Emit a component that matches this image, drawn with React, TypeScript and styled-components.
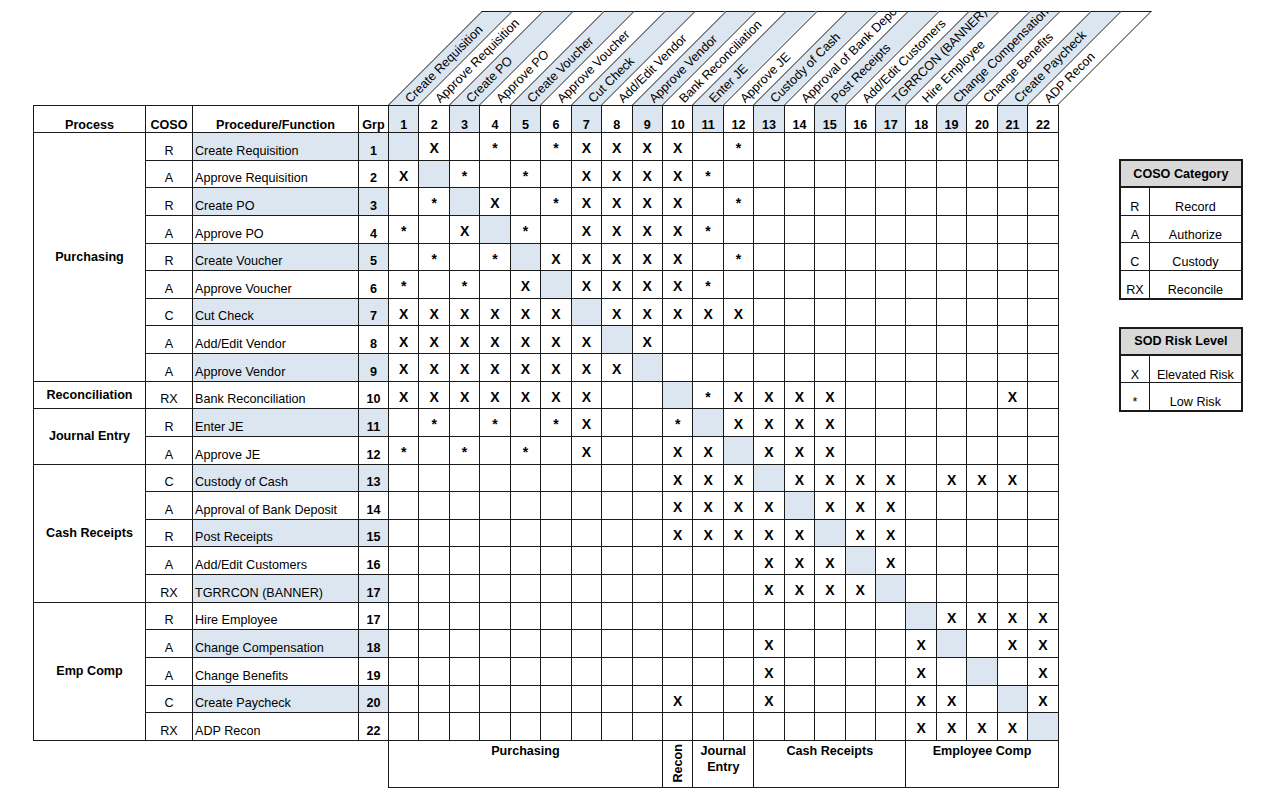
import React from "react";
import styled, { createGlobalStyle, css } from "styled-components";

const COL_W = 30.45;
const ROW_H = 27.636;
const LINE = "#1a1a1a";
const SHADE = "#dce6f1";
const FONT = `"Liberation Sans", Arial, sans-serif`;

const GlobalStyle = createGlobalStyle`
  html, body { margin: 0; padding: 0; background: #ffffff; }
  body { font-family: ${FONT}; color: #000; }
  * { box-sizing: border-box; }
`;

const headers = [
  "Create Requisition",
  "Approve Requisition",
  "Create PO",
  "Approve PO",
  "Create Voucher",
  "Approve Voucher",
  "Cut Check",
  "Add/Edit Vendor",
  "Approve Vendor",
  "Bank Reconciliation",
  "Enter JE",
  "Approve JE",
  "Custody of Cash",
  "Approval of Bank Deposit",
  "Post Receipts",
  "Add/Edit Customers",
  "TGRRCON (BANNER)",
  "Hire Employee",
  "Change Compensation",
  "Change Benefits",
  "Create Paycheck",
  "ADP Recon",
];

type Row = { coso: string; name: string; grp: string; marks: string };

const rows: Row[] = [
  { coso: "R", name: "Create Requisition", grp: "1", marks: ".X.*.*XXXX.*.........." },
  { coso: "A", name: "Approve Requisition", grp: "2", marks: "X.*.*.XXXX*..........." },
  { coso: "R", name: "Create PO", grp: "3", marks: ".*.X.*XXXX.*.........." },
  { coso: "A", name: "Approve PO", grp: "4", marks: "*.X.*.XXXX*..........." },
  { coso: "R", name: "Create Voucher", grp: "5", marks: ".*.*.XXXXX.*.........." },
  { coso: "A", name: "Approve Voucher", grp: "6", marks: "*.*.X.XXXX*..........." },
  { coso: "C", name: "Cut Check", grp: "7", marks: "XXXXXX.XXXXX.........." },
  { coso: "A", name: "Add/Edit Vendor", grp: "8", marks: "XXXXXXX.X............." },
  { coso: "A", name: "Approve Vendor", grp: "9", marks: "XXXXXXXX.............." },
  { coso: "RX", name: "Bank Reconciliation", grp: "10", marks: "XXXXXXX...*XXXX.....X." },
  { coso: "R", name: "Enter JE", grp: "11", marks: ".*.*.*X..*.XXXX......." },
  { coso: "A", name: "Approve JE", grp: "12", marks: "*.*.*.X..XX.XXX......." },
  { coso: "C", name: "Custody of Cash", grp: "13", marks: ".........XXX.XXXX.XXX." },
  { coso: "A", name: "Approval of Bank Deposit", grp: "14", marks: ".........XXXX.XXX....." },
  { coso: "R", name: "Post Receipts", grp: "15", marks: ".........XXXXX.XX....." },
  { coso: "A", name: "Add/Edit Customers", grp: "16", marks: "............XXX.X....." },
  { coso: "RX", name: "TGRRCON (BANNER)", grp: "17", marks: "............XXXX......" },
  { coso: "R", name: "Hire Employee", grp: "17", marks: "..................XXXX" },
  { coso: "A", name: "Change Compensation", grp: "18", marks: "............X....X..XX" },
  { coso: "A", name: "Change Benefits", grp: "19", marks: "............X....X...X" },
  { coso: "C", name: "Create Paycheck", grp: "20", marks: ".........X..X....XX..X" },
  { coso: "RX", name: "ADP Recon", grp: "22", marks: ".................XXXX." },
];

const processGroups: Record<number, { label: string; span: number }> = {
  0: { label: "Purchasing", span: 9 },
  9: { label: "Reconciliation", span: 1 },
  10: { label: "Journal Entry", span: 2 },
  12: { label: "Cash Receipts", span: 5 },
  17: { label: "Emp Comp", span: 5 },
};

const footerGroups = [
  { label: "Purchasing", span: 9, vertical: false },
  { label: "Recon", span: 1, vertical: true },
  { label: "Journal Entry", span: 2, vertical: false },
  { label: "Cash Receipts", span: 5, vertical: false },
  { label: "Employee Comp", span: 5, vertical: false },
];

const cosoLegend = [
  ["R", "Record"],
  ["A", "Authorize"],
  ["C", "Custody"],
  ["RX", "Reconcile"],
];

const sodLegend = [
  ["X", "Elevated Risk"],
  ["*", "Low Risk"],
];

/* ---------- layout ---------- */

const Page = styled.div`
  display: flex;
  align-items: flex-start;
  padding: 11px 0 0 33px;
  font-family: ${FONT};
  font-size: 12.6px;
`;

const Sheet = styled.div`
  display: flex;
  flex-direction: column;
`;

/* ---------- slanted header ---------- */

const SlantRow = styled.div`
  display: flex;
  height: 94px;
  margin-left: 355px;
`;

const Strip = styled.div<{ $shaded: boolean; $last: boolean }>`
  position: relative;
  flex: 0 0 ${(p) => (p.$last ? COL_W + 1 : COL_W)}px;
  height: 94px;
  border-top: 1px solid ${LINE};
  border-left: 1px solid ${LINE};
  ${(p) =>
    p.$last &&
    css`
      border-right: 1px solid ${LINE};
    `}
  background: ${(p) => (p.$shaded ? SHADE : "#fff")};
  transform: skewX(-45deg);
  transform-origin: 0 100%;
  overflow: hidden;
`;

const StripLabel = styled.div`
  position: absolute;
  left: 0;
  top: 100%;
  height: 21.5px;
  line-height: 21.5px;
  padding-left: 16px;
  white-space: nowrap;
  font-size: 12.6px;
  transform-origin: 0 0;
  transform: skewX(45deg) rotate(-45deg);
`;

/* ---------- main grid ---------- */

const Matrix = styled.div`
  display: grid;
  grid-template-columns: 112px 47px 166px 30px repeat(22, ${COL_W}px);
  grid-template-rows: 27px repeat(22, ${ROW_H}px);
  width: ${1 + 112 + 47 + 166 + 30 + 22 * COL_W}px;
  border-top: 1px solid ${LINE};
  border-left: 1px solid ${LINE};
`;

const Cell = styled.div<{ $shaded?: boolean }>`
  display: flex;
  align-items: flex-end;
  justify-content: center;
  border-right: 1px solid ${LINE};
  border-bottom: 1px solid ${LINE};
  padding-bottom: 2px;
  white-space: nowrap;
  overflow: hidden;
  line-height: normal;
  background: ${(p) => (p.$shaded ? SHADE : "transparent")};
`;

const HeadCell = styled(Cell)`
  font-weight: bold;
  padding-bottom: 0;
`;

const ProcessCell = styled(Cell)<{ $span: number }>`
  grid-row: span ${(p) => p.$span};
  align-items: center;
  padding-bottom: 0;
  font-weight: bold;
`;

const CosoCell = styled(Cell)``;

const ProcCell = styled(Cell)`
  justify-content: flex-start;
  padding-left: 2px;
`;

const GrpCell = styled(Cell)`
  font-weight: bold;
`;

const MarkCell = styled(Cell)`
  font-size: 14px;
  font-weight: bold;
  padding-bottom: 3.5px;
`;

/* ---------- footer groups ---------- */

const Footer = styled.div`
  display: grid;
  grid-template-columns: repeat(22, ${COL_W}px);
  height: 47px;
  margin-left: 355px;
  width: ${1 + 22 * COL_W}px;
  border-left: 1px solid ${LINE};
  border-bottom: 1px solid ${LINE};
`;

const FooterCell = styled.div<{ $span: number }>`
  grid-column: span ${(p) => p.$span};
  display: flex;
  justify-content: center;
  align-items: flex-start;
  padding: 2px 4px 0;
  border-right: 1px solid ${LINE};
  font-weight: bold;
  text-align: center;
  line-height: 16px;
`;

const VerticalText = styled.span`
  writing-mode: vertical-rl;
  transform: rotate(180deg);
  line-height: 14px;
  margin-top: 1px;
`;

/* ---------- legend ---------- */

const Legend = styled.div`
  display: flex;
  flex-direction: column;
  gap: 27px;
  margin-left: 60px;
  margin-top: 148px;
`;

const LegendBox = styled.div`
  width: 124px;
  border: 2px solid ${LINE};
`;

const LegendHead = styled.div`
  height: 27px;
  display: flex;
  align-items: center;
  justify-content: center;
  background: #d9d9d9;
  border-bottom: 2px solid ${LINE};
  font-weight: bold;
`;

const LegendRow = styled.div`
  display: grid;
  grid-template-columns: 29px 1fr;
  height: 27.6px;
  border-bottom: 1px solid ${LINE};
  &:last-child {
    border-bottom: none;
    height: 26.8px;
  }
`;

const LegendKey = styled.div`
  display: flex;
  align-items: flex-end;
  justify-content: center;
  padding-bottom: 0.5px;
  border-right: 1px solid ${LINE};
`;

const LegendValue = styled.div`
  display: flex;
  align-items: flex-end;
  justify-content: center;
  padding-bottom: 0.5px;
`;

export default function App() {
  return (
    <>
      <GlobalStyle />
      <Page>
        <Sheet>
          <SlantRow>
            {headers.map((h, i) => (
              <Strip key={h} $shaded={i % 2 === 0} $last={i === headers.length - 1}>
                <StripLabel>{h}</StripLabel>
              </Strip>
            ))}
          </SlantRow>

          <Matrix>
            <HeadCell>Process</HeadCell>
            <HeadCell>COSO</HeadCell>
            <HeadCell>Procedure/Function</HeadCell>
            <HeadCell>Grp</HeadCell>
            {headers.map((_, i) => (
              <HeadCell key={`h${i}`} $shaded={i % 2 === 0}>
                {i + 1}
              </HeadCell>
            ))}

            {rows.map((r, ri) => {
              const group = processGroups[ri];
              return (
                <React.Fragment key={`r${ri}`}>
                  {group && <ProcessCell $span={group.span}>{group.label}</ProcessCell>}
                  <CosoCell>{r.coso}</CosoCell>
                  <ProcCell $shaded={ri % 2 === 0}>{r.name}</ProcCell>
                  <GrpCell $shaded={ri % 2 === 0}>{r.grp}</GrpCell>
                  {r.marks.split("").map((m, ci) => (
                    <MarkCell key={ci} $shaded={ci === ri}>
                      {m === "." ? "" : m}
                    </MarkCell>
                  ))}
                </React.Fragment>
              );
            })}
          </Matrix>

          <Footer>
            {footerGroups.map((g) => (
              <FooterCell key={g.label} $span={g.span}>
                {g.vertical ? <VerticalText>{g.label}</VerticalText> : g.label}
              </FooterCell>
            ))}
          </Footer>
        </Sheet>

        <Legend>
          <LegendBox>
            <LegendHead>COSO Category</LegendHead>
            {cosoLegend.map(([k, v]) => (
              <LegendRow key={k}>
                <LegendKey>{k}</LegendKey>
                <LegendValue>{v}</LegendValue>
              </LegendRow>
            ))}
          </LegendBox>
          <LegendBox>
            <LegendHead>SOD Risk Level</LegendHead>
            {sodLegend.map(([k, v]) => (
              <LegendRow key={k}>
                <LegendKey>{k}</LegendKey>
                <LegendValue>{v}</LegendValue>
              </LegendRow>
            ))}
          </LegendBox>
        </Legend>
      </Page>
    </>
  );
}
